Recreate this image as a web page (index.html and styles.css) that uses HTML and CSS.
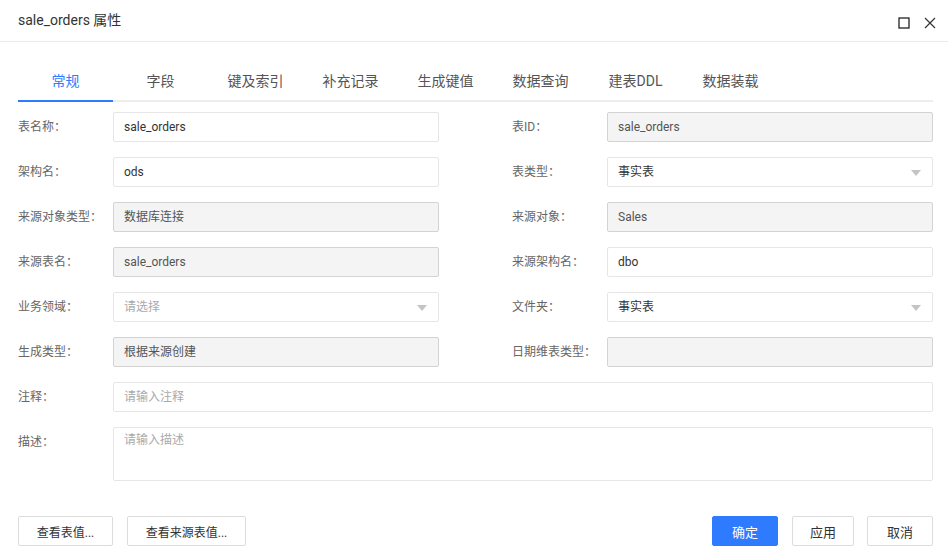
FILE: index.html
```html
<!DOCTYPE html>
<html lang="zh">
<head>
<meta charset="utf-8">
<title>sale_orders 属性</title>
<link rel="stylesheet" href="styles.css">
</head>
<body>
<div class="dialog">
  <header class="dlg-header">
    <span class="dlg-title">sale_orders 属性</span>
    <div class="dlg-actions">
      <svg class="ico" width="12" height="12" viewBox="0 0 12 12"><rect x="1" y="1" width="10" height="10" fill="none" stroke="#222" stroke-width="1.3"/></svg>
      <svg class="ico" width="12" height="12" viewBox="0 0 12 12"><path d="M1 1L11 11M11 1L1 11" stroke="#333" stroke-width="1.2" fill="none"/></svg>
    </div>
  </header>

  <nav class="tabs">
    <div class="tab active">常规</div>
    <div class="tab">字段</div>
    <div class="tab">键及索引</div>
    <div class="tab">补充记录</div>
    <div class="tab">生成键值</div>
    <div class="tab">数据查询</div>
    <div class="tab">建表DDL</div>
    <div class="tab">数据装载</div>
  </nav>

  <div class="form">
    <label class="lbl">表名称：</label>
    <div class="field">sale_orders</div>
    <label class="lbl lbl-r">表ID：</label>
    <div class="field disabled">sale_orders</div>

    <label class="lbl">架构名：</label>
    <div class="field">ods</div>
    <label class="lbl lbl-r">表类型：</label>
    <div class="field select">事实表<span class="caret"></span></div>

    <label class="lbl">来源对象类型：</label>
    <div class="field disabled">数据库连接</div>
    <label class="lbl lbl-r">来源对象：</label>
    <div class="field disabled">Sales</div>

    <label class="lbl">来源表名：</label>
    <div class="field disabled">sale_orders</div>
    <label class="lbl lbl-r">来源架构名：</label>
    <div class="field">dbo</div>

    <label class="lbl">业务领域：</label>
    <div class="field select placeholder">请选择<span class="caret"></span></div>
    <label class="lbl lbl-r">文件夹：</label>
    <div class="field select">事实表<span class="caret"></span></div>

    <label class="lbl">生成类型：</label>
    <div class="field disabled">根据来源创建</div>
    <label class="lbl lbl-r">日期维表类型：</label>
    <div class="field disabled"></div>

    <label class="lbl">注释：</label>
    <div class="field wide placeholder">请输入注释</div>

    <label class="lbl">描述：</label>
    <div class="field wide area placeholder">请输入描述</div>
  </div>

  <footer class="dlg-footer">
    <div class="btn-group">
      <button class="btn w95">查看表值...</button>
      <button class="btn w119">查看来源表值...</button>
    </div>
    <div class="btn-group">
      <button class="btn primary w66">确定</button>
      <button class="btn w62">应用</button>
      <button class="btn w66 last">取消</button>
    </div>
  </footer>
</div>
</body>
</html>
```

FILE: styles.css
```css
* { box-sizing: border-box; }
html, body {
  margin: 0;
  padding: 0;
  background: #fff;
}
body {
  font-family: Roboto, "Noto Sans CJK SC", sans-serif;
  color: #333;
  width: 948px;
  height: 550px;
  overflow: hidden;
}
.dialog {
  width: 948px;
  height: 550px;
  display: flex;
  flex-direction: column;
}
.dlg-header {
  height: 42px;
  border-bottom: 1px solid #ececec;
  display: flex;
  align-items: center;
  justify-content: space-between;
  padding: 0 12px 0 18px;
}
.dlg-title {
  font-size: 14px;
  color: #333;
  line-height: 20px;
  margin-top: -2px;
}
.dlg-actions {
  display: flex;
  gap: 14px;
  align-items: center;
  margin-top: 4px;
}
.ico { display: block; }

.tabs {
  margin: 20px 15px 0 18px;
  display: flex;
  border-bottom: 2px solid #ededed;
}
.tab {
  width: 95px;
  height: 38px;
  line-height: 38px;
  text-align: center;
  font-size: 14px;
  color: #555;
}
.tab.active {
  color: #2f7bff;
  border-bottom: 2px solid #2f7bff;
  margin-bottom: -2px;
  height: 40px;
}

.form {
  margin: 10px 15px 0 18px;
  display: grid;
  grid-template-columns: 95px 326px 1fr 326px;
  row-gap: 15px;
}
.lbl {
  font-size: 12px;
  color: #666;
  height: 30px;
  line-height: 30px;
  white-space: nowrap;
}
.lbl-r { padding-left: 73px; }
.field {
  height: 30px;
  border: 1px solid #e6e6e6;
  border-radius: 2px;
  font-size: 12px;
  line-height: 28px;
  padding: 0 10px;
  color: #333;
  position: relative;
  background: #fff;
}
.field.disabled {
  background: #f4f4f4;
  border-color: #d3d3d3;
  color: #555;
}
.field.placeholder { color: #aaa; }
.field.wide { grid-column: 2 / 5; }
.field.area {
  height: 54px;
  line-height: 24px;
}
.caret {
  position: absolute;
  right: 11px;
  top: 12px;
  width: 0;
  height: 0;
  border-left: 5.5px solid transparent;
  border-right: 5.5px solid transparent;
  border-top: 6px solid #c4c4c4;
}

.dlg-footer {
  margin: 35px 15px 0 18px;
  display: flex;
  justify-content: space-between;
}
.btn-group {
  display: flex;
  gap: 14px;
}
.btn {
  height: 30px;
  border: 1px solid #dcdcdc;
  border-radius: 2px;
  background: #fff;
  font-family: Roboto, "Noto Sans CJK SC", sans-serif;
  font-size: 12px;
  color: #333;
  padding: 0;
  text-align: center;
}
.btn.primary {
  background: #2f7bff;
  border-color: #2f7bff;
  color: #fff;
  font-size: 13px;
}
.w95 { width: 95px; }
.w119 { width: 119px; }
.w66 { width: 66px; font-size: 13px; }
.w62 { width: 62px; font-size: 13px; }
.btn.last { margin-left: -1px; }
```
